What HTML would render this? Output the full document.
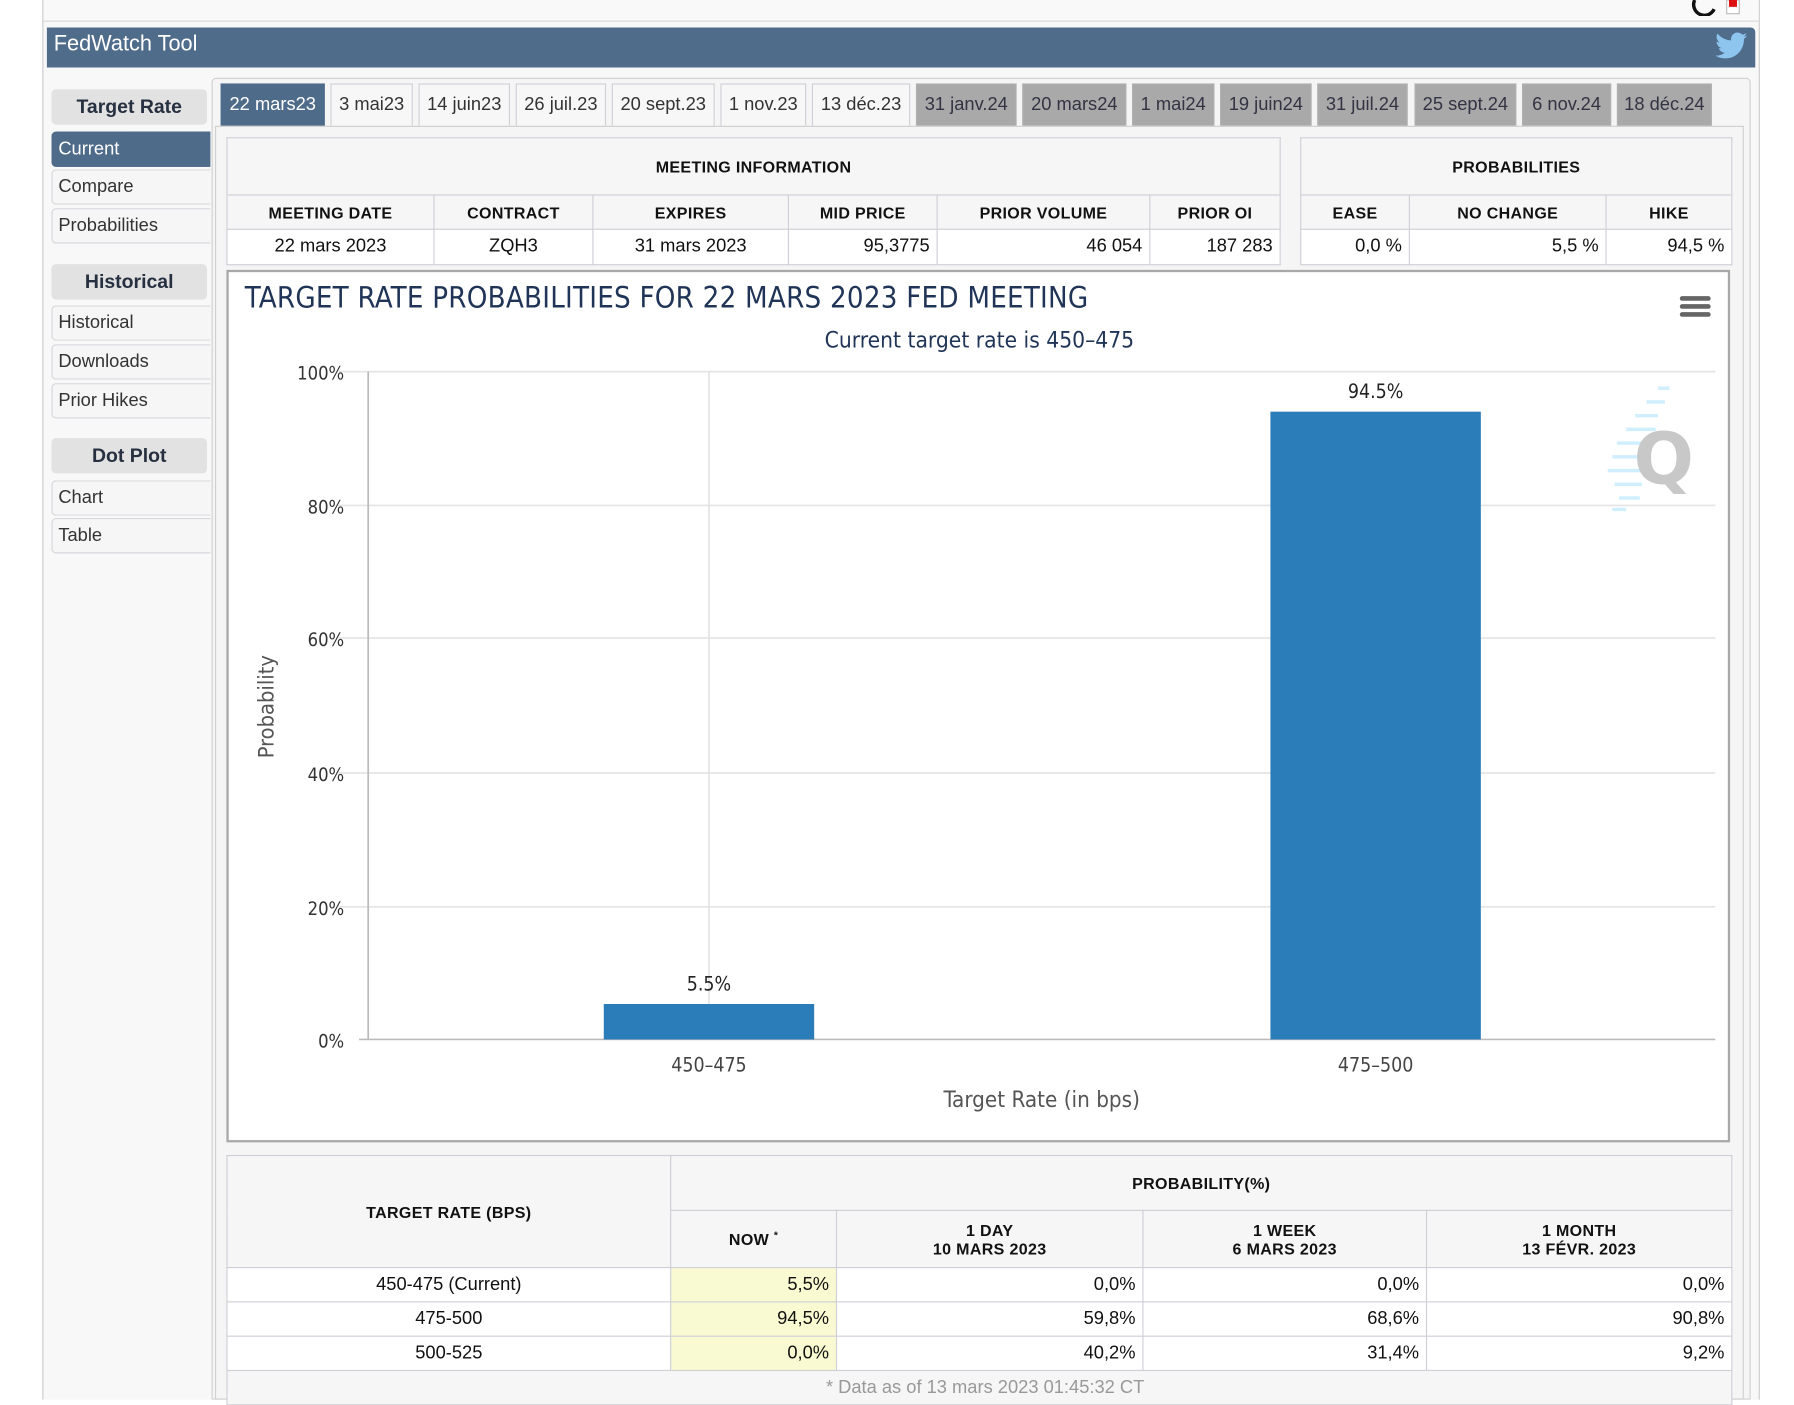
<!DOCTYPE html>
<html><head><meta charset="utf-8">
<style>
*{box-sizing:border-box;margin:0;padding:0}
html,body{width:1794px;height:1399px;overflow:hidden;background:#fff}
#w{position:absolute;left:0;top:0;width:1570px;height:1224px;transform:scale(1.1435);transform-origin:0 0;font-family:"Liberation Sans",Arial,sans-serif;color:#222}
.a{position:absolute}
.page{left:37px;top:0;width:1502px;height:1224px;background:#f8f8f8;border-left:1px solid #ccc;border-right:1px solid #ccc}
.topbar{left:38px;top:0;width:1500px;height:19px;border-bottom:1px solid #d8d8d8;background:#f9f9f9}
.hdr{left:41px;top:24px;width:1494px;height:35px;background:#506c8b;border-radius:0 4px 0 0;color:#fff;font-size:19px;line-height:30px;padding-left:6px}
.sbtn{left:45px;width:136px;height:31px;background:#e2e2e2;border-radius:4px;font-weight:bold;font-size:17px;text-align:center;line-height:31px;color:#263040}
.sit{left:45px;width:139px;height:31px;background:#f6f6f6;border:1px solid #d6d6dc;border-right:none;border-radius:4px 0 0 4px;font-size:16px;line-height:29px;padding-left:5px;color:#333}
.sit.on{background:#4f6b8a;color:#fff;border-color:#4f6b8a}
.main{left:185px;top:68px;width:1346px;height:1156px;border:1px solid #d0d0d0;border-radius:4px 4px 0 0;background:#f5f5f5}
.tab{top:73px;height:38px;font-size:16px;line-height:36px;text-align:center;border:1px solid #d0d0d8;border-bottom:none;background:#f7f7f7;color:#333;white-space:nowrap}
.tab.g{background:#a9a9a9;color:#334;border-color:#b0b0b0}
.tab.on{background:#4f6b8a;color:#fff;border-color:#4f6b8a}
.cont{left:188px;top:110px;width:1337px;height:1114px;border:1px solid #d0d0d0;background:#f5f5f5}
table{border-collapse:collapse;position:absolute;font-size:16px}
td,th{border:1px solid #cfcfd8}
th{font-size:14px;font-weight:bold;color:#111;background:#f6f6f6;letter-spacing:.3px}
td{background:#fff;color:#111}
.chart{left:198px;top:236px;width:1315px;height:763px;border:2px solid #a8a8a8;background:#fff}
.cn{font-family:"DejaVu Sans Condensed","DejaVu Sans",sans-serif;font-stretch:condensed}
</style></head><body><div id="w">
<div class="a page"></div>
<div class="a topbar"></div>
<svg class="a" style="left:1478px;top:0" width="46" height="14"><path d="M4 0 A9 9 0 0 0 21 8" stroke="#111" stroke-width="3" fill="none"/><rect x="32" y="0" width="11" height="12" fill="#fff" stroke="#bbb"/><rect x="34" y="0" width="7" height="6" fill="#d11"/></svg>
<div class="a hdr">FedWatch Tool</div>
<svg class="a" style="left:1500px;top:28px" width="28" height="24" viewBox="0 0 24 20"><path d="M24 2.4c-.9.4-1.8.6-2.8.8 1-.6 1.8-1.600 2.2-2.7-1 .6-2 1-3.1 1.2A4.9 4.9 0 0 0 11.9 6 14 14 0 0 1 1.7.9a4.9 4.9 0 0 0 1.5 6.6c-.8 0-1.6-.3-2.2-.6 0 2.4 1.7 4.4 3.9 4.8-.7.2-1.5.2-2.2.1.6 2 2.4 3.4 4.6 3.4A9.9 9.9 0 0 1 0 17.3 14 14 0 0 0 7.5 19.5c9.1 0 14-7.5 14-14v-.6c1-.7 1.8-1.600 2.5-2.500z" fill="#8ec5ef"/></svg>

<div class="a sbtn" style="top:78px">Target Rate</div>
<div class="a sit on" style="top:115px">Current</div>
<div class="a sit" style="top:148px">Compare</div>
<div class="a sit" style="top:182px">Probabilities</div>
<div class="a sbtn" style="top:231px">Historical</div>
<div class="a sit" style="top:267px">Historical</div>
<div class="a sit" style="top:301px">Downloads</div>
<div class="a sit" style="top:335px">Prior Hikes</div>
<div class="a sbtn" style="top:383px">Dot Plot</div>
<div class="a sit" style="top:420px">Chart</div>
<div class="a sit" style="top:453px">Table</div>

<div class="a main"></div>
<div class="a tab on" style="left:193px;width:91px">22 mars23</div>
<div class="a tab" style="left:289px;width:72px">3 mai23</div>
<div class="a tab" style="left:366px;width:80px">14 juin23</div>
<div class="a tab" style="left:451px;width:79px">26 juil.23</div>
<div class="a tab" style="left:535px;width:90px">20 sept.23</div>
<div class="a tab" style="left:630px;width:75px">1 nov.23</div>
<div class="a tab" style="left:710px;width:86px">13 déc.23</div>
<div class="a tab g" style="left:801px;width:88px">31 janv.24</div>
<div class="a tab g" style="left:894px;width:91px">20 mars24</div>
<div class="a tab g" style="left:990px;width:72px">1 mai24</div>
<div class="a tab g" style="left:1067px;width:80px">19 juin24</div>
<div class="a tab g" style="left:1152px;width:79px">31 juil.24</div>
<div class="a tab g" style="left:1237px;width:89px">25 sept.24</div>
<div class="a tab g" style="left:1331px;width:78px">6 nov.24</div>
<div class="a tab g" style="left:1414px;width:83px">18 déc.24</div>
<div class="a cont"></div>

<table style="left:198px;top:120px;width:922px">
<tr style="height:50px"><th colspan="6">MEETING INFORMATION</th></tr>
<tr style="height:30px"><th style="width:181px">MEETING DATE</th><th style="width:139px">CONTRACT</th><th style="width:171px">EXPIRES</th><th style="width:130px">MID PRICE</th><th style="width:186px">PRIOR VOLUME</th><th>PRIOR OI</th></tr>
<tr style="height:31px"><td style="text-align:center">22 mars 2023</td><td style="text-align:center">ZQH3</td><td style="text-align:center">31 mars 2023</td><td style="text-align:right;padding-right:6px">95,3775</td><td style="text-align:right;padding-right:6px">46 054</td><td style="text-align:right;padding-right:6px">187 283</td></tr>
</table>
<table style="left:1137px;top:120px;width:378px">
<tr style="height:50px"><th colspan="3">PROBABILITIES</th></tr>
<tr style="height:30px"><th style="width:95px">EASE</th><th style="width:172px">NO CHANGE</th><th>HIKE</th></tr>
<tr style="height:31px"><td style="text-align:right;padding-right:6px">0,0 %</td><td style="text-align:right;padding-right:6px">5,5 %</td><td style="text-align:right;padding-right:6px">94,5 %</td></tr>
</table>

<div class="a chart"></div>
<div class="a cn" style="left:214px;top:246px;font-size:25.5px;color:#1f3456;white-space:nowrap;letter-spacing:.2px">TARGET RATE PROBABILITIES FOR 22 MARS 2023 FED MEETING</div>
<div class="a cn" style="left:600px;top:286px;width:513px;text-align:center;font-size:19.8px;color:#1f3456">Current target rate is 450–475</div>
<div class="a" style="left:1469px;top:259px;width:27px;height:4px;background:#666;border-radius:2px;box-shadow:0 7px 0 #666,0 14px 0 #666"></div>
<svg class="a" style="left:200px;top:238px" width="1311" height="759">
<g stroke="#e4e4e4" stroke-width="1.5">
<line x1="96" y1="87" x2="1300" y2="87"/><line x1="96" y1="204" x2="1300" y2="204"/><line x1="96" y1="320" x2="1300" y2="320"/><line x1="96" y1="438" x2="1300" y2="438"/><line x1="96" y1="555" x2="1300" y2="555"/>
<line x1="420" y1="87" x2="420" y2="671"/>
</g>
<line x1="122" y1="87" x2="122" y2="671" stroke="#bbb" stroke-width="1.5"/>
<line x1="114" y1="671" x2="1300" y2="671" stroke="#bbb" stroke-width="1.5"/>
<rect x="328" y="640" width="184" height="31" fill="#2a7db8"/>
<rect x="911" y="122" width="184" height="549" fill="#2a7db8"/>
<g fill="#cfefff" ><rect x="1250" y="100" width="10" height="3"/><rect x="1240" y="112" width="16" height="3"/><rect x="1230" y="124" width="20" height="3"/><rect x="1222" y="136" width="26" height="3"/><rect x="1214" y="148" width="30" height="3"/><rect x="1210" y="160" width="34" height="3"/><rect x="1206" y="172" width="36" height="3"/><rect x="1212" y="184" width="24" height="3"/><rect x="1216" y="196" width="18" height="3"/><rect x="1210" y="206" width="12" height="3"/></g>
<text x="1255" y="185" font-family="DejaVu Sans" font-weight="bold" font-size="62" fill="#c8c8c8" text-anchor="middle">Q</text>
<g font-family="DejaVu Sans Condensed,DejaVu Sans" font-size="16" fill="#333" text-anchor="end">
<text x="101" y="94">100%</text><text x="101" y="211">80%</text><text x="101" y="327">60%</text><text x="101" y="445">40%</text><text x="101" y="562">20%</text><text x="101" y="678">0%</text>
</g>
<g font-family="DejaVu Sans Condensed,DejaVu Sans" font-size="17" fill="#222" text-anchor="middle">
<text x="420" y="628">5.5%</text><text x="1003" y="110">94.5%</text>
<text x="420" y="699" fill="#444">450–475</text><text x="1003" y="699" fill="#444">475–500</text>
<text x="711" y="730" font-size="19.5" fill="#555">Target Rate (in bps)</text>
<text transform="translate(39 380) rotate(-90)" font-size="19" fill="#555">Probability</text>
</g>
</svg>

<table style="left:198px;top:1010px;width:1317px">
<tr style="height:48px"><th rowspan="2" style="width:388px">TARGET RATE (BPS)</th><th colspan="4">PROBABILITY(%)</th></tr>
<tr style="height:50px"><th style="width:145px">NOW <sup style="font-size:9px">*</sup></th><th style="width:268px">1 DAY<br>10 MARS 2023</th><th style="width:248px">1 WEEK<br>6 MARS 2023</th><th>1 MONTH<br>13 FÉVR. 2023</th></tr>
<tr style="height:30px"><td style="text-align:center">450-475 (Current)</td><td style="text-align:right;padding-right:6px;background:#fafad2">5,5%</td><td style="text-align:right;padding-right:6px">0,0%</td><td style="text-align:right;padding-right:6px">0,0%</td><td style="text-align:right;padding-right:6px">0,0%</td></tr>
<tr style="height:30px"><td style="text-align:center">475-500</td><td style="text-align:right;padding-right:6px;background:#fafad2">94,5%</td><td style="text-align:right;padding-right:6px">59,8%</td><td style="text-align:right;padding-right:6px">68,6%</td><td style="text-align:right;padding-right:6px">90,8%</td></tr>
<tr style="height:30px"><td style="text-align:center">500-525</td><td style="text-align:right;padding-right:6px;background:#fafad2">0,0%</td><td style="text-align:right;padding-right:6px">40,2%</td><td style="text-align:right;padding-right:6px">31,4%</td><td style="text-align:right;padding-right:6px">9,2%</td></tr>
<tr style="height:30px"><td colspan="5" style="text-align:center;background:#f6f6f6;color:#999;padding-left:10px">* Data as of 13 mars 2023 01:45:32 CT</td></tr>
</table>
</div></body></html>
